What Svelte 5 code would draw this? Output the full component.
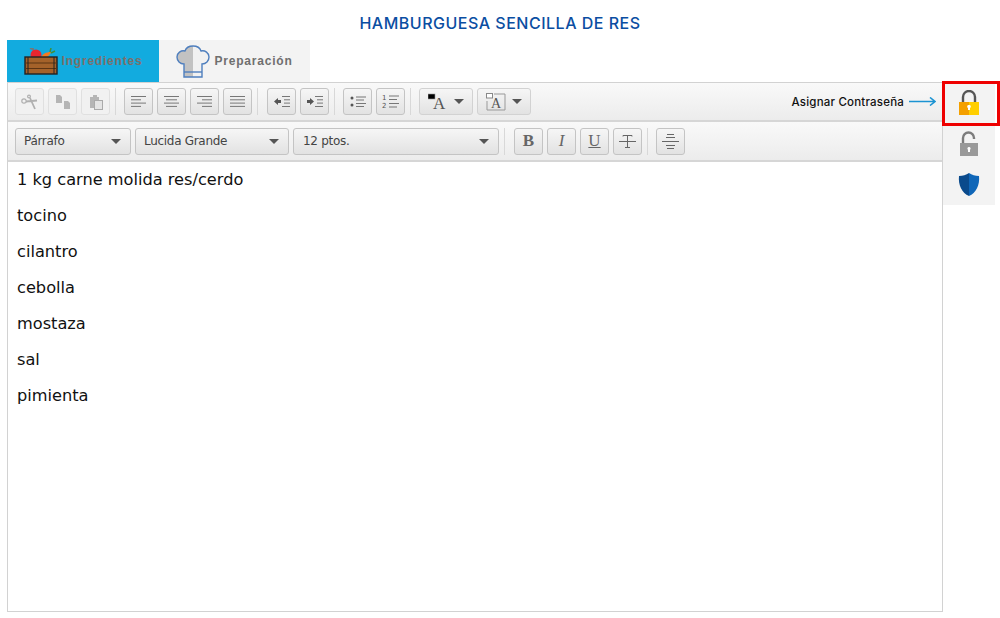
<script>
	const ingredients = ['1 kg carne molida res/cerdo', 'tocino', 'cilantro', 'cebolla', 'mostaza', 'sal', 'pimienta'];
	const aligns = [
		[[0, 15], [0, 10], [0, 15], [0, 10]],
		[[0, 15], [2, 13], [0, 15], [2, 13]],
		[[0, 15], [5, 15], [0, 15], [5, 15]],
		[[0, 15], [0, 15], [0, 15], [0, 15]]
	];
</script>

<div class="page">
	<h1>HAMBURGUESA SENCILLA DE RES</h1>

	<div class="tabs">
		<div class="tab active">
			<svg width="34" height="27" viewBox="0 0 34 27">
				<path d="M6 0l3 1 1 3" stroke="#777" stroke-width="2" fill="none" />
				<circle cx="12" cy="7" r="5.500" fill="#e8262f" />
				<path d="M17 10c1-4 5-6 10-6-1 3-4 6-9 7z" fill="#f47a20" />
				<path d="M26 4l1-4M27 5l4-2" stroke="#3f8f3c" stroke-width="1.500" />
				<rect x="1" y="9" width="32" height="17" fill="#a5622a" stroke="#222" stroke-width="1.400" />
				<path d="M1 15h32M1 20.500h32" stroke="#5d3413" stroke-width="1.200" />
				<path d="M4 9v17M30 9v17" stroke="#222" stroke-width="1" />
			</svg>
			<span>Ingredientes</span>
		</div>
		<div class="tab">
			<svg width="34" height="33" viewBox="0 0 34 33">
				<path d="M17 1c-4 0-7 2-8 5-4-1-8 2-8 6 0 4 3 7 7 7v13h18V19c4 0 7-3 7-7 0-4-4-7-8-6-1-3-4-5-8-5z" fill="#f1f1f1" />
				<path d="M17 1c-4 0-7 2-8 5-4-1-8 2-8 6 0 4 3 7 7 7v13h9z" fill="#c2c2c2" />
				<path d="M17 1c-4 0-7 2-8 5-4-1-8 2-8 6 0 4 3 7 7 7v13h18V19c4 0 7-3 7-7 0-4-4-7-8-6-1-3-4-5-8-5z" fill="none" stroke="#4f7fbe" stroke-width="1.400" />
				<path d="M8 27h18" stroke="#4f7fbe" stroke-width="1.400" />
			</svg>
			<span>Preparación</span>
		</div>
	</div>

	<div class="main">
		<div class="editor">
			<div class="toolbar">
				<div class="group">
					<button class="off" aria-label="Cortar">
						<svg width="17" height="16" viewBox="0 0 17 16" fill="none" stroke="#b0b0b0" stroke-width="1.200">
							<circle cx="3" cy="7" r="2.200" /><circle cx="8" cy="2.500" r="1.400" />
							<path d="M5 7.500l11-1M9 4l5 11" stroke-width="1.800" />
						</svg>
					</button>
					<button class="off" aria-label="Copiar">
						<svg width="16" height="16" viewBox="0 0 16 16" fill="#b5b5b5">
							<path d="M1 1h4l2 2v6H1zM9 7h4l2 2v6H9z" />
						</svg>
					</button>
					<button class="off" aria-label="Pegar">
						<svg width="16" height="16" viewBox="0 0 16 16">
							<path d="M2 3h3V1h4v2h2v3H7v8H2z" fill="#b5b5b5" />
							<rect x="6.500" y="6.500" width="8" height="9" fill="#e4e4e4" stroke="#aaa" />
						</svg>
					</button>
				</div>
				<i class="sep"></i>
				<div class="group">
					{#each aligns as lines}
						<button aria-label="Alinear">
							<svg width="15" height="13" viewBox="0 0 15 13" stroke="#777" stroke-width="1">
								{#each lines as l, n}
									<path d="M{l[0]} {1.5 + n * 3.3}H{l[1]}" />
								{/each}
							</svg>
						</button>
					{/each}
				</div>
				<i class="sep gap"></i>
				<div class="group">
					<button aria-label="Reducir sangría">
						<svg width="16" height="13" viewBox="0 0 16 13">
							<path d="M0 6.500l4-3.500v2h3v3H4v2z" fill="#555" />
							<path d="M8 1.500h8M10 4.800h6M10 8.100h6M8 11.500h8" stroke="#777" />
						</svg>
					</button>
					<button aria-label="Aumentar sangría">
						<svg width="16" height="13" viewBox="0 0 16 13">
							<path d="M7 6.500L3 3v2H0v3h3v2z" fill="#555" />
							<path d="M8 1.500h8M10 4.800h6M10 8.100h6M8 11.500h8" stroke="#777" />
						</svg>
					</button>
				</div>
				<i class="sep"></i>
				<div class="group">
					<button aria-label="Viñetas">
						<svg width="16" height="13" viewBox="0 0 16 13">
							<circle cx="2" cy="3" r="1.500" fill="#555" /><circle cx="2" cy="10" r="1.500" fill="#555" />
							<path d="M6 2h10M6 5h8M6 8.500h10M6 11.500h8" stroke="#777" />
						</svg>
					</button>
					<button aria-label="Numeración">
						<svg width="17" height="15" viewBox="0 0 17 15">
							<text x="0" y="6" class="num">1</text>
							<text x="0" y="14" class="num">2</text>
							<path d="M7 2h10M7 5.500h8M7 9.500h10M7 13h8" stroke="#777" />
						</svg>
					</button>
				</div>
				<i class="sep"></i>
				<div class="group">
					<button class="wide" aria-label="Color de texto">
						<svg width="20" height="23" viewBox="0 0 20 23">
							<rect x="0" y="4" width="7" height="5" fill="#000" stroke="#999" stroke-width="0.600" />
							<text x="5" y="19" class="big">A</text>
						</svg>
						<b class="caret"></b>
					</button>
					<button class="wide" aria-label="Color de fondo">
						<svg width="20" height="18" viewBox="0 0 20 18">
							<rect x="0.500" y="0.500" width="6" height="4.500" fill="#fff" stroke="#888" />
							<path d="M8 1h11v16H1V8" fill="none" stroke="#999" />
							<text x="5" y="15" class="big small">A</text>
						</svg>
						<b class="caret"></b>
					</button>
				</div>
				<div class="hint">
					<span>Asignar Contraseña</span>
					<svg width="27" height="9" viewBox="0 0 27 9" fill="none" stroke="#1b93d2" stroke-width="1.600">
						<path d="M0 4.500h26M21 0.500l5 4-5 4" />
					</svg>
				</div>
			</div>

			<div class="toolbar second">
				<div class="group">
					<button class="select s1">Párrafo<b class="caret"></b></button>
					<button class="select s2">Lucida Grande<b class="caret"></b></button>
					<button class="select s3">12 ptos.<b class="caret"></b></button>
				</div>
				<i class="sep gap"></i>
				<div class="group">
					<button class="fmt bold">B</button>
					<button class="fmt italic">I</button>
					<button class="fmt under">U</button>
					<button aria-label="Tachado">
						<svg width="17" height="15" viewBox="0 0 17 15" fill="none" stroke="#666">
							<path d="M4 2.500V1.500h9v1M8.500 1.500v12M6 13.500h5" />
							<path d="M0 7.500h17" />
						</svg>
					</button>
				</div>
				<i class="sep"></i>
				<button aria-label="Línea horizontal">
					<svg width="17" height="17" viewBox="0 0 17 17" stroke="#666">
						<path d="M5 1.500h7M4 4.500h9M0 8.500h17M4 12.500h9M5 15.500h7" />
					</svg>
				</button>
			</div>

			<div class="content">
				{#each ingredients as item}
					<p>{item}</p>
				{/each}
			</div>
		</div>

		<div class="side">
			<div class="slot">
				<svg width="20" height="25" viewBox="0 0 20 25">
					<path d="M4 12V7a6 6 0 0 1 12 0v5" fill="none" stroke="#555" stroke-width="2.400" />
					<rect x="0" y="12" width="10" height="13" fill="#f4a000" />
					<rect x="10" y="12" width="10" height="13" fill="#ffcf00" />
					<path d="M10 15a1.600 1.600 0 0 1 1 3v2H9v-2a1.600 1.600 0 0 1 1-3z" fill="#fff" />
				</svg>
			</div>
			<div class="slot">
				<svg width="20" height="26" viewBox="0 0 20 26">
					<path d="M4 12V7a5.500 5.500 0 0 1 11 0v1" fill="none" stroke="#7c7c7c" stroke-width="2.400" />
					<rect x="1" y="12" width="18" height="13" fill="#999" />
					<path d="M10 16a1.500 1.500 0 0 1 1 2.700V21H9v-2.300A1.500 1.500 0 0 1 10 16z" fill="#fff" />
				</svg>
			</div>
			<div class="slot">
				<svg width="22" height="25" viewBox="0 0 22 25">
					<path d="M11 1c3 2 6 3 10 3 1 9-3 17-10 20z" fill="#0f66b8" />
					<path d="M11 1C8 3 5 4 1 4c-1 9 3 17 10 20z" fill="#0a4a8c" />
				</svg>
			</div>
			<div class="mark"></div>
		</div>
	</div>
</div>

<style>
	:global(body) {
		background: #fff;
		font-family: 'DejaVu Sans', sans-serif;
	}

	.page {
		width: 1000px;
		height: 618px;
		overflow: hidden;
		padding: 0 0 6px 7px;
		box-sizing: border-box;
		display: flex;
		flex-direction: column;
	}

	h1 {
		height: 40px;
		margin: 0 0 0 -7px;
		font: 500 16px/47px 'Inter', sans-serif;
		letter-spacing: 0.5px;
		color: #0b4ea2;
		text-align: center;
	}

	.tabs {
		display: flex;
		height: 42px;
	}

	.tab {
		width: 151px;
		display: flex;
		align-items: center;
		justify-content: center;
		gap: 4px;
		background: #f3f3f3;
		color: #6f6f6f;
		font: bold 12px 'Liberation Sans', sans-serif;
		letter-spacing: 0.8px;
	}

	.tab.active {
		background: #12abdf;
		color: #7d6f6a;
		width: 152px;
	}

	.main {
		flex: 1;
		display: flex;
		min-height: 0;
	}

	.editor {
		width: 936px;
		border: 1px solid #d2d2d2;
		box-sizing: border-box;
		display: flex;
		flex-direction: column;
	}

	.toolbar {
		height: 39px;
		flex: none;
		box-sizing: border-box;
		padding: 0 0 0 7px;
		display: flex;
		align-items: center;
		background: linear-gradient(#f9f9f9, #ececec);
		border-bottom: 2px solid #d6d6d6;
	}

	.toolbar.second {
		height: 40px;
	}

	.group {
		display: flex;
		gap: 4px;
	}

	.sep {
		width: 1px;
		height: 27px;
		margin: 0 8px 0 5px;
		background: #d8d8d8;
	}

	.sep.gap {
		margin-right: 9px;
	}

	button {
		width: 29px;
		height: 27px;
		padding: 0;
		display: flex;
		align-items: center;
		justify-content: center;
		background: linear-gradient(#f6f6f6, #e2e2e2);
		border: 1px solid #c4c4c4;
		border-radius: 3px;
		font: 13px 'DejaVu Sans', sans-serif;
		color: #444;
	}

	button.off {
		background: #f1f1f1;
		border-color: #e0e0e0;
	}

	button.wide {
		width: 54px;
		gap: 6px;
		border-color: #d2d2d2;
	}

	.caret {
		width: 0;
		height: 0;
		border-left: 5px solid transparent;
		border-right: 5px solid transparent;
		border-top: 5px solid #555;
	}

	.select {
		justify-content: space-between;
		padding: 0 9px 0 8px;
		box-sizing: border-box;
		font-size: 12px;
		letter-spacing: -0.3px;
	}

	.s1 { width: 116px; }
	.s2 { width: 154px; }
	.s3 { width: 206px; padding-left: 9px; }

	.fmt {
		font: 17px 'Liberation Serif', serif;
		color: #666;
	}

	.bold { font-weight: bold; }
	.italic { font-style: italic; }
	.under { text-decoration: underline; }

	.num {
		font: 7px 'DejaVu Sans', sans-serif;
		fill: #555;
	}

	.big {
		font: 17px 'Liberation Serif', serif;
		fill: #555;
	}

	.big.small {
		font-size: 14px;
	}

	.hint {
		margin-left: auto;
		display: flex;
		align-items: center;
		gap: 5px;
		font: 500 11.5px 'Inter', sans-serif;
		letter-spacing: 0.2px;
		color: #111;
		padding-right: 6px;
	}

	.content {
		flex: 1;
		padding: 0 9px;
		background: #fff;
	}

	.content p {
		margin: 0;
		height: 36px;
		font: 16.2px/36px 'DejaVu Sans', sans-serif;
		color: #111;
	}

	.side {
		position: relative;
		width: 52px;
		height: 123px;
		background: #f3f3f3;
		display: flex;
		flex-direction: column;
		align-items: center;
	}

	.slot {
		height: 41px;
		display: flex;
		align-items: center;
		justify-content: center;
	}

	.mark {
		position: absolute;
		left: -1px;
		top: -1px;
		width: 58px;
		height: 45px;
		box-sizing: border-box;
		border: 3px solid #ee0000;
	}
</style>
